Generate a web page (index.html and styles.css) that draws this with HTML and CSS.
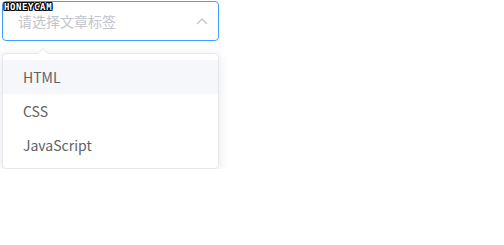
FILE: index.html
```html
<!DOCTYPE html>
<html lang="zh-CN">

<head>
    <meta charset="UTF-8">
    <meta name="viewport" content="width=device-width, initial-scale=1.0">
    <title>文章标签选择</title>

    <link rel="stylesheet" href="styles.css">

</head>

<body>
    <div class="watermark">HONEYCAM</div>

    <div class="select">
        <div class="select-input">
            <span class="placeholder">请选择文章标签</span>
            <svg class="arrow" width="12" height="8" viewBox="0 0 12 8">
                <path d="M1 7 L6 2 L11 7" fill="none" stroke="#c0c4cc" stroke-width="1.3"/>
            </svg>
        </div>

        <div class="dropdown">
            <span class="popper-arrow"></span>
            <ul class="options">
                <li class="option hover">HTML</li>
                <li class="option">CSS</li>
                <li class="option">JavaScript</li>
            </ul>
        </div>
    </div>
</body>

</html>
```

FILE: styles.css
```css
* {
    box-sizing: border-box;
}

body {
    margin: 0;
    background: #fff;
    font-family: "Noto Sans CJK SC", "Noto Sans", sans-serif;
    font-size: 14px;
}

/* метка поверх поля */
.watermark {
    position: absolute;
    left: 4px;
    top: 2px;
    font-family: "DejaVu Sans Mono", monospace;
    font-weight: bold;
    font-size: 9px;
    line-height: 10px;
    letter-spacing: 0.6px;
    color: #fff;
    text-shadow: 1px 0 #000, -1px 0 #000, 0 1px #000, 0 -1px #000,
                 1px 1px #000, -1px -1px #000, 1px -1px #000, -1px 1px #000;
}

.select {
    width: 217px;
    margin: 1px 0 0 2px;
}

.select-input {
    height: 40px;
    border: 1px solid #409eff;
    border-radius: 4px;
    padding: 0 10px 0 15px;
    display: flex;
    align-items: center;
    justify-content: space-between;
}

.placeholder {
    color: #c0c4cc;
}

.dropdown {
    position: relative;
    margin-top: 12px;
    border: 1px solid #e4e7ed;
    border-radius: 4px;
    background: #fff;
    box-shadow: 0 2px 12px 0 rgba(0, 0, 0, 0.1);
}

.popper-arrow {
    position: absolute;
    top: -6px;
    left: 34px;
    width: 0;
    height: 0;
    border-left: 6px solid transparent;
    border-right: 6px solid transparent;
    border-bottom: 6px solid #e4e7ed;
}

.popper-arrow::after {
    content: "";
    position: absolute;
    top: 1px;
    left: -6px;
    border-left: 6px solid transparent;
    border-right: 6px solid transparent;
    border-bottom: 6px solid #fff;
}

.options {
    list-style: none;
    margin: 0;
    padding: 6px 0;
}

.option {
    height: 34px;
    line-height: 34px;
    padding: 0 20px;
    color: #606266;
}

.option.hover {
    background: #f5f7fa;
}
```
